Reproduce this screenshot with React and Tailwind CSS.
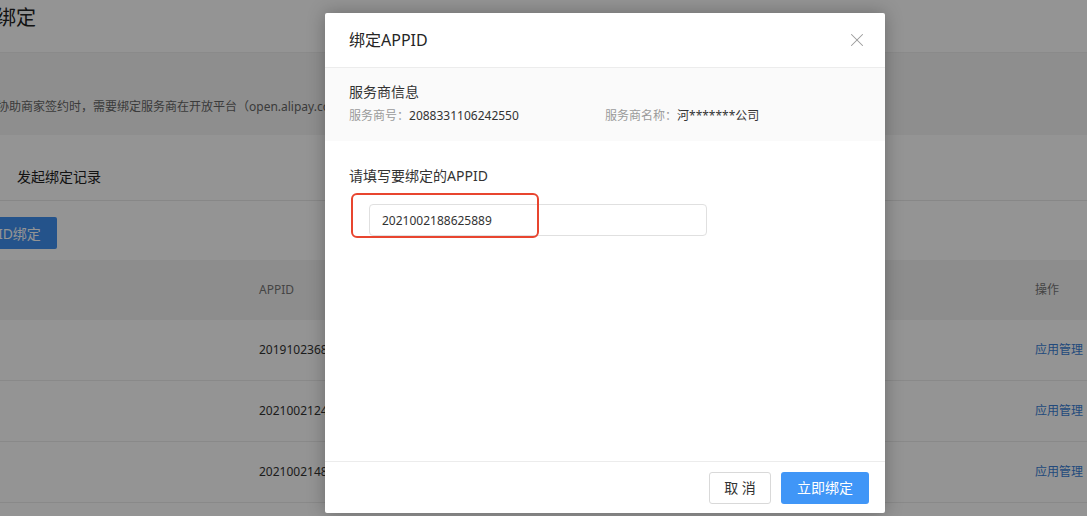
import React from 'react';
import { X } from 'lucide-react';

const rows = [
    { appid: '2019102368251473' },
    { appid: '2021002124619385' },
    { appid: '2021002148730926' },
];

function BindModal() {
    return (
        <div className="absolute left-[325px] top-[13px] w-[560px] h-[500px] bg-white rounded-[2px] shadow-[0_0_18px_rgba(0,0,0,0.28)] flex flex-col">
            <div className="h-[55px] flex items-center justify-between pl-[24px] pr-[17px] border-b border-[#ececec]">
                <h2 className="text-[16px] leading-[22px] text-[#262626]">绑定APPID</h2>
                <button className="text-[#9a9a9a]">
                    <X size={22} strokeWidth={1.1} />
                </button>
            </div>

            {/* service provider info */}
            <div className="bg-[#fafafa] px-[24px] pt-[14px] pb-[17px]">
                <p className="text-[14px] leading-[20px] text-[#333]">服务商信息</p>
                <div className="mt-[6px] flex text-[12px] leading-[16px]">
                    <div className="w-[256px] whitespace-nowrap">
                        <span className="text-[#9a9a9a]">服务商号：</span>
                        <span className="text-[#333]">2088331106242550</span>
                    </div>
                    <div className="whitespace-nowrap">
                        <span className="text-[#9a9a9a]">服务商名称：</span>
                        <span className="text-[#333]">河*******公司</span>
                    </div>
                </div>
            </div>

            <div className="flex-1 px-[24px] pt-[25px]">
                <p className="text-[14px] leading-[20px] text-[#333]">请填写要绑定的APPID</p>
                <div className="relative mt-[18px] ml-[20px] w-[338px]">
                    <input
                        readOnly
                        value="2021002188625889"
                        className="w-full h-[32px] border border-[#e0e0e0] rounded-[4px] px-[12px] text-[12px] text-[#333] outline-none"
                    />
                    <div className="absolute left-[-18px] top-[-11px] w-[188px] h-[45px] border-2 border-[#e8452f] rounded-[6px] pointer-events-none" />
                </div>
            </div>

            <div className="h-[52px] border-t border-[#ececec] flex items-center justify-end gap-[10px] pr-[16px]">
                <button className="w-[62px] h-[32px] border border-[#d9d9d9] rounded-[3px] text-[14px] text-[#333] bg-white">取 消</button>
                <button className="w-[88px] h-[32px] rounded-[3px] text-[14px] text-white bg-[#4096f7]">立即绑定</button>
            </div>
        </div>
    );
}

export default function App() {
    return (
        <div className="relative w-[1087px] h-[516px] overflow-hidden bg-white font-['Noto_Sans','Noto_Sans_CJK_SC',sans-serif]">
            {/* page underneath */}
            <div className="h-[52px] -ml-[4px] text-[20px] leading-[36px] text-[#222]">绑定</div>

            <div className="h-[83px] bg-[#f5f5f5] border-t border-[#eeeeee] flex items-end pb-[20px] -ml-[3px] whitespace-nowrap">
                <p className="text-[12px] leading-[16px] text-[#666]">协助商家签约时，需要绑定服务商在开放平台（open.alipay.com）创建的应用，绑定后即可代商家完成签约。</p>
            </div>

            <div className="h-[66px] flex items-end pb-[12px] px-[17px] border-b border-[#e8e8e8]">
                <span className="text-[14px] leading-[22px] text-[#222]">发起绑定记录</span>
            </div>

            <div className="pt-[16px] pb-[11px]">
                <button className="-ml-[44px] h-[32px] px-[16px] rounded-[2px] bg-[#3f8ff0] text-white text-[14px] whitespace-nowrap">APPID绑定</button>
            </div>

            <div className="text-[12px]">
                <div className="h-[60px] bg-[#f3f3f3] flex items-center">
                    <div className="w-[259px]" />
                    <div className="flex-1 text-[#777]">APPID</div>
                    <div className="w-[52px] text-[#777] whitespace-nowrap">操作</div>
                </div>
                {rows.map((row) => (
                    <div key={row.appid} className="h-[61px] border-b border-[#ececec] flex items-center">
                        <div className="w-[259px]" />
                        <div className="flex-1 text-[#333]">{row.appid}</div>
                        <div className="w-[52px] text-[#3a7fd6] whitespace-nowrap">应用管理</div>
                    </div>
                ))}
            </div>

            <div className="absolute inset-0 bg-black/[0.42]" />

            <BindModal />
        </div>
    );
}
